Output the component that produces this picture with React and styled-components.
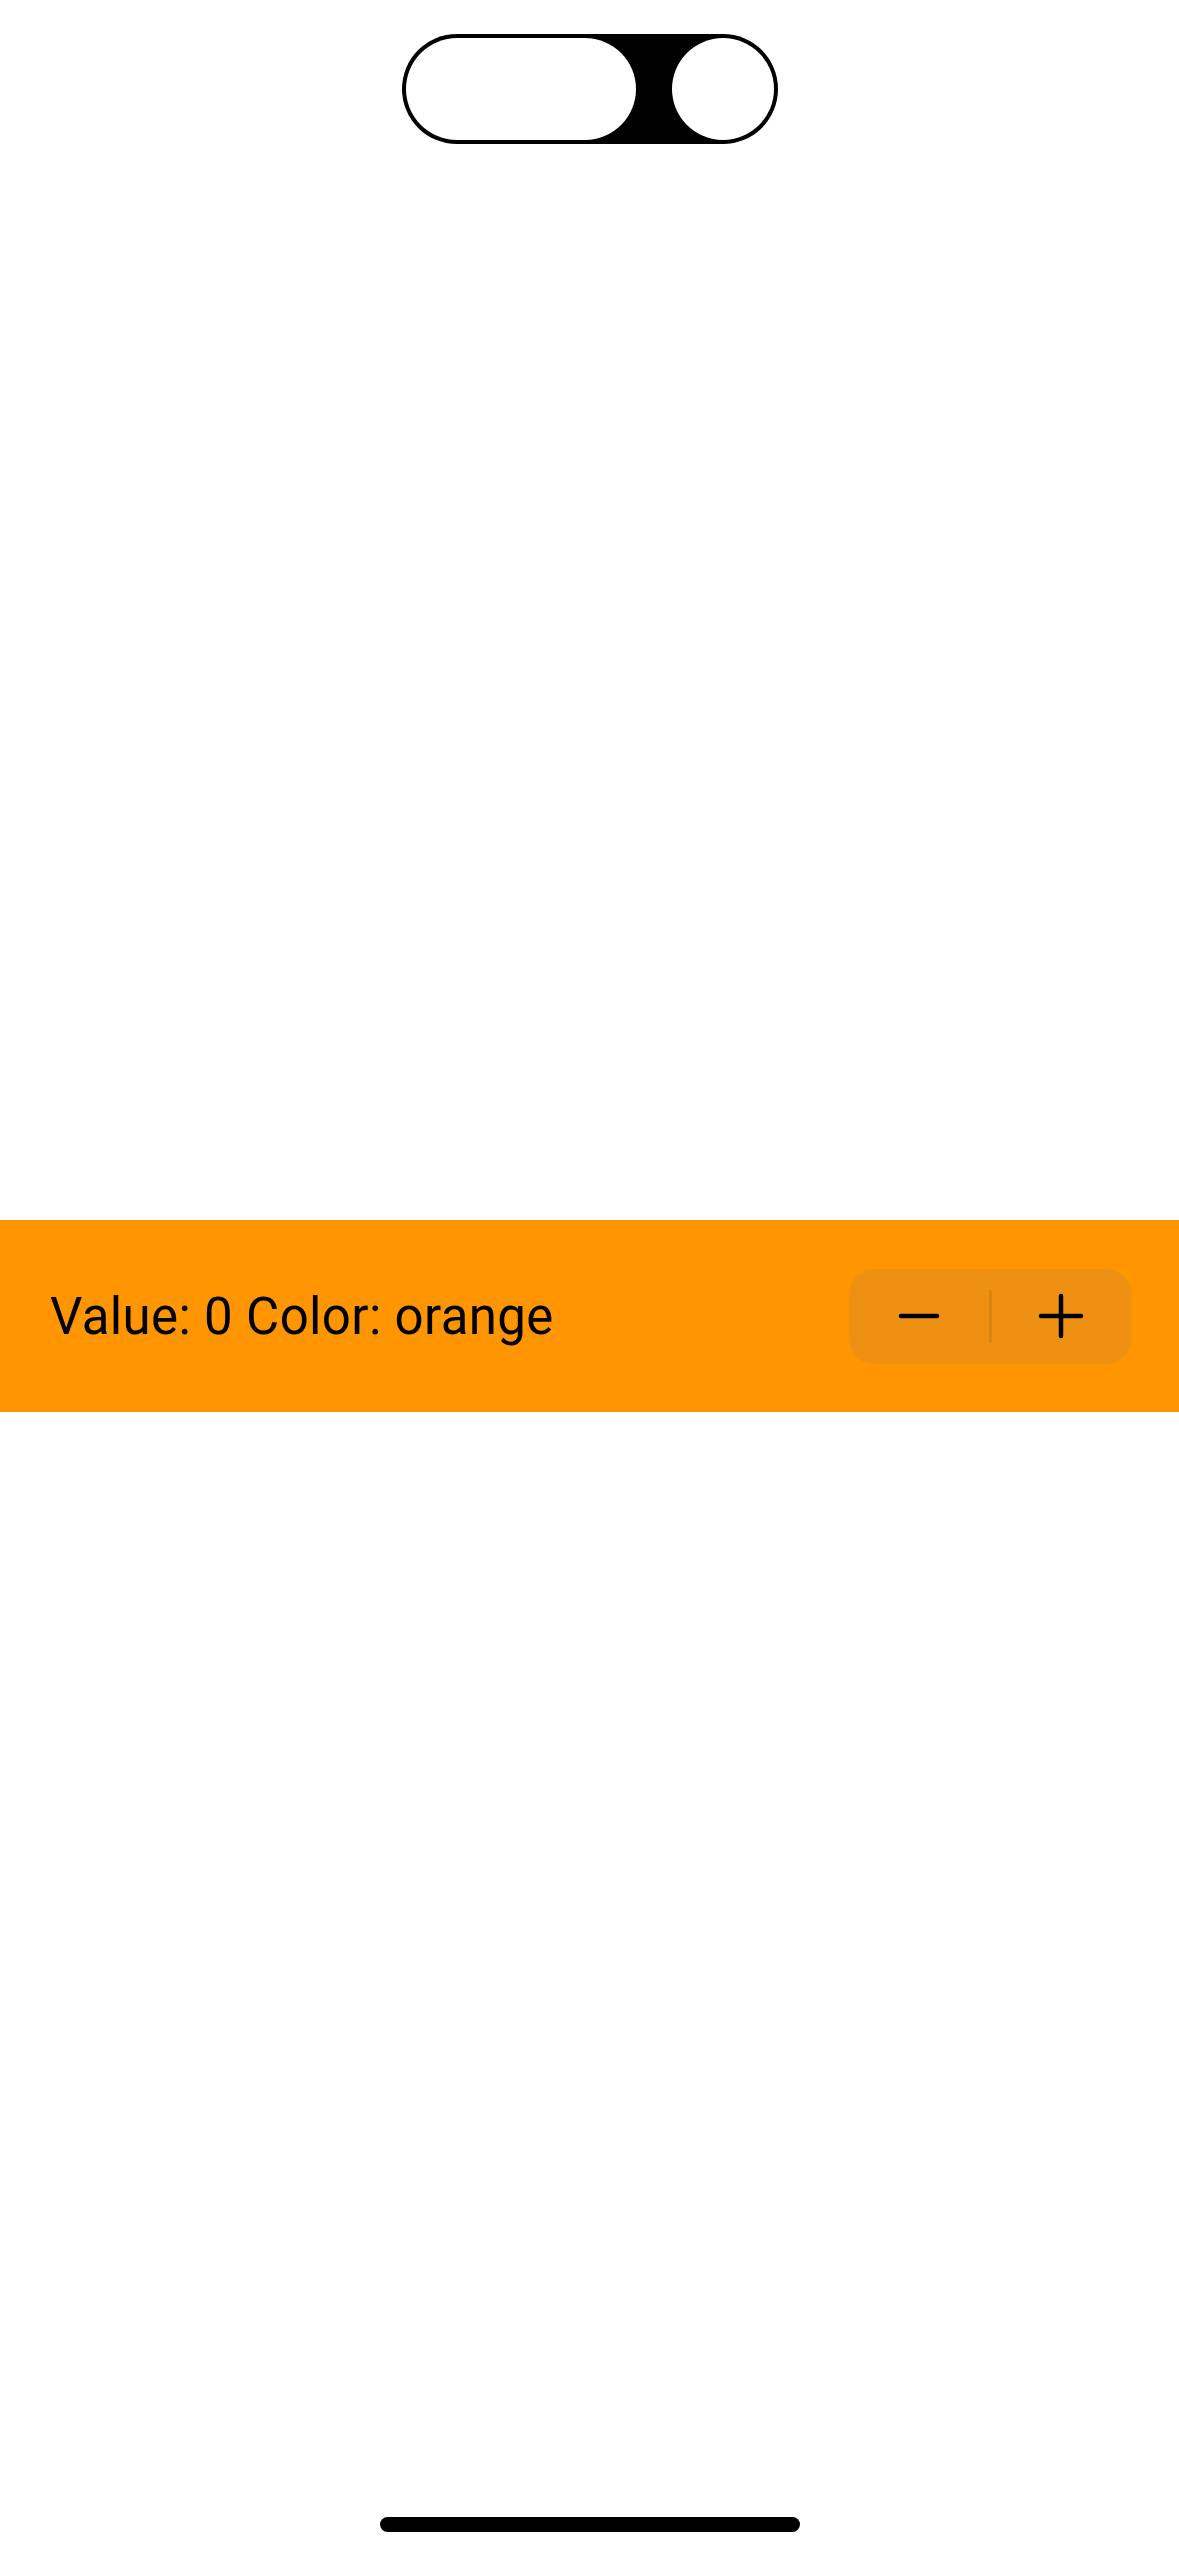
import React, { useState } from 'react';
import styled, { createGlobalStyle } from 'styled-components';

const GlobalStyle = createGlobalStyle`
  html, body {
    margin: 0;
    padding: 0;
    background: #ffffff;
  }
  body {
    font-family: Roboto, Inter, "Liberation Sans", sans-serif;
  }
`;

const Screen = styled.div`
  width: 1179px;
  height: 2556px;
  display: flex;
  flex-direction: column;
  align-items: center;
  background: #ffffff;
  overflow: hidden;
`;

const Island = styled.div`
  margin-top: 34px;
  width: 376px;
  height: 110px;
  box-sizing: border-box;
  padding: 4px;
  border-radius: 55px;
  background: #000;
  display: flex;
  align-items: center;
  justify-content: space-between;
`;

const IslandPill = styled.div`
  width: ${(p) => p.w}px;
  height: 102px;
  border-radius: 51px;
  background: #fff;
`;

const Band = styled.div`
  margin-top: 1076px;
  align-self: stretch;
  height: 192px;
  background: #ff9500;
  display: flex;
  align-items: center;
  justify-content: space-between;
  padding: 0 48px 0 50px;
`;

const Label = styled.div`
  font-size: 51px;
  color: #000;
  letter-spacing: 0.35px;
`;

const Stepper = styled.div`
  width: 282px;
  height: 95px;
  border-radius: 25px;
  background: #ee9112;
  display: flex;
  align-items: center;
`;

const StepButton = styled.button`
  flex: 1;
  height: 100%;
  border: none;
  background: transparent;
  padding: 0;
  display: flex;
  align-items: center;
  justify-content: center;
  cursor: pointer;
`;

const Divider = styled.div`
  width: 3px;
  height: 53px;
  background: #d8860f;
`;

const Spacer = styled.div`
  flex: 1;
`;

const HomeIndicator = styled.div`
  width: 420px;
  height: 15px;
  border-radius: 8px;
  background: #000;
  margin-bottom: 24px;
`;

const Minus = () => (
  <svg width="44" height="10" viewBox="0 0 44 10">
    <line x1="4" y1="5" x2="40" y2="5" stroke="#000" strokeWidth="4.5" strokeLinecap="round" />
  </svg>
);

const Plus = () => (
  <svg width="46" height="46" viewBox="0 0 46 46">
    <line x1="3" y1="23" x2="43" y2="23" stroke="#000" strokeWidth="4.5" strokeLinecap="round" />
    <line x1="23" y1="3" x2="23" y2="43" stroke="#000" strokeWidth="4.5" strokeLinecap="round" />
  </svg>
);

export default function App() {
  const [value, setValue] = useState(0);

  return (
    <Screen>
      <GlobalStyle />
      <Island>
        <IslandPill w={230} />
        <IslandPill w={102} />
      </Island>

      <Band>
        <Label>Value: {value} Color: orange</Label>
        <Stepper>
          <StepButton aria-label="decrement" onClick={() => setValue(value - 1)}>
            <Minus />
          </StepButton>
          <Divider />
          <StepButton aria-label="increment" onClick={() => setValue(value + 1)}>
            <Plus />
          </StepButton>
        </Stepper>
      </Band>

      <Spacer />
      <HomeIndicator />
    </Screen>
  );
}
